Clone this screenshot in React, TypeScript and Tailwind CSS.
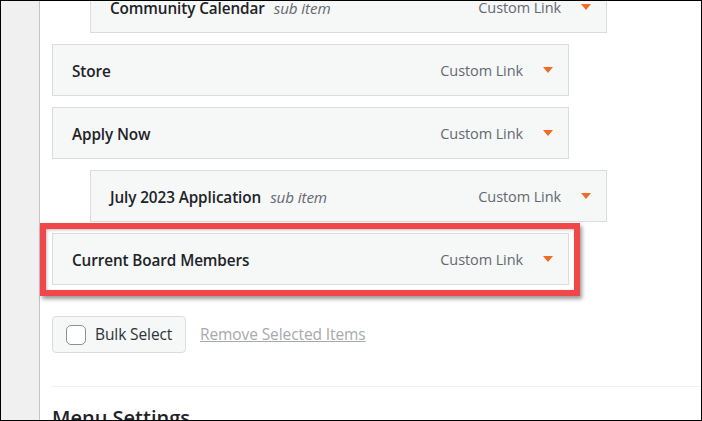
import React from "react";

const font = { fontFamily: '"Open Sans", "Noto Sans", Arial, sans-serif' };

function Arrow() {
  return (
    <svg width="10" height="6" viewBox="0 0 10 6" className="block">
      <polygon points="0,0 10,0 5,6" fill="#f26b21" />
    </svg>
  );
}

function Item({
  title,
  sub,
  indent,
  highlight,
}: {
  title: string;
  sub?: boolean;
  indent?: boolean;
  highlight?: boolean;
}) {
  return (
    <div className={indent ? "pl-[38px]" : ""}>
      <div className="relative w-[517px] h-[52px] border border-[#dcdcde] bg-[#f6f7f7] flex items-center pl-[19px] pr-[15px] pt-[2px]">
        <span className="text-[15.3px] font-semibold text-[#1d2327] tracking-[-0.1px]">{title}</span>
        {sub && (
          <span className="ml-[9px] text-[15.2px] italic text-[#646970] tracking-[-0.1px]">sub item</span>
        )}
        <span className="ml-auto text-[14.5px] text-[#646970] tracking-[-0.1px]">Custom Link</span>
        <span className="ml-[20px] -mt-[2px]">
          <Arrow />
        </span>
        {highlight && (
          <span className="pointer-events-none absolute -left-[13px] -top-[11px] -right-[12px] -bottom-[12px] border-[6px] border-[#f2474a] shadow-[inset_1px_1px_3px_rgba(0,0,0,0.25),2px_3px_4px_rgba(0,0,0,0.4)]" />
        )}
      </div>
    </div>
  );
}

export default function App() {
  return (
    <div
      className="w-[702px] h-[421px] border border-black overflow-hidden flex bg-white"
      style={font}
    >
      <div className="w-[39px] shrink-0 bg-[#f0f0f1] border-r border-[#c3c4c7]" />
      <div className="flex-1 pl-[12px]">
        <div className="-mt-[20px] flex flex-col gap-[11px]">
          <Item title="Community Calendar" sub indent />
          <Item title="Store" />
          <Item title="Apply Now" />
          <Item title="July 2023 Application" sub indent />
          <Item title="Current Board Members" highlight />
        </div>
        <div className="mt-[31px] flex items-center">
          <div className="w-[134px] h-[37px] rounded-[4px] border border-[#dcdcde] bg-[#f6f7f7] flex items-center pl-[13px]">
            <span className="w-[20px] h-[20px] rounded-[5px] border border-[#8c8f94] bg-white" />
            <span className="ml-[9px] text-[15.5px] text-[#2c3338] tracking-[-0.1px]">Bulk Select</span>
          </div>
          <span className="ml-[14px] text-[15.5px] text-[#a7aaad] underline tracking-[-0.1px]">
            Remove Selected Items
          </span>
        </div>
        <div className="mt-[33px] border-t border-[#f0f0f1]" />
        <div className="mt-[19px] text-[20px] font-semibold text-[#1d2327] leading-[24px]">Menu Settings</div>
      </div>
    </div>
  );
}
